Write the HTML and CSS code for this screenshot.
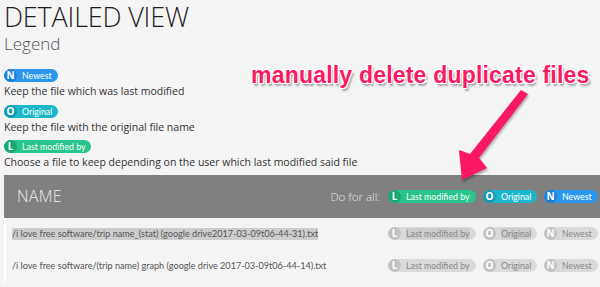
FILE: index.html
```html
<!DOCTYPE html>
<html lang="en">
<head>
    <meta charset="UTF-8">
    <title>Detailed View</title>
    <link rel="stylesheet" href="styles.css">
</head>
<body>

<div class="page">
    <h1 class="title">DETAILED VIEW</h1>
    <h2 class="subtitle">Legend</h2>

    <!-- Legend -->
    <div class="legend">
        <div class="legend-item">
            <span class="badge newest"><span class="key">N</span>Newest</span>
            <p>Keep the file which was last modified</p>
        </div>
        <div class="legend-item">
            <span class="badge original"><span class="key">O</span>Original</span>
            <p>Keep the file with the original file name</p>
        </div>
        <div class="legend-item">
            <span class="badge modified"><span class="key">L</span>Last modified by</span>
            <p>Choose a file to keep depending on the user which last modified said file</p>
        </div>
    </div>

    <!-- Files table -->
    <div class="files">
        <div class="files-head">
            <span class="head-name">NAME</span>
            <div class="do-all">
                <span class="do-label">Do for all:</span>
                <span class="badge modified wide"><span class="key">L</span>Last modified by</span>
                <span class="badge original"><span class="key">O</span>Original</span>
                <span class="badge newest"><span class="key">N</span>Newest</span>
            </div>
        </div>
        <div class="file-row">
            <span class="file-name selected">/i love free software/trip name_(stat) (google drive2017-03-09t06-44-31).txt</span>
            <div class="choices">
                <span class="badge off wide"><span class="key">L</span><span class="selected">Last modified by</span></span>
                <span class="badge off"><span class="key">O</span><span class="selected">Original</span></span>
                <span class="badge off"><span class="key">N</span>Newest</span>
            </div>
        </div>
        <div class="file-row">
            <span class="file-name">/i love free software/(trip name) graph (google drive 2017-03-09t06-44-14).txt</span>
            <div class="choices">
                <span class="badge off wide"><span class="key">L</span>Last modified by</span>
                <span class="badge off"><span class="key">O</span>Original</span>
                <span class="badge off"><span class="key">N</span>Newest</span>
            </div>
        </div>
    </div>
</div>

<!-- Annotation -->
<div class="callout">manually delete duplicate files</div>
<svg class="arrow" width="600" height="287" viewBox="0 0 600 287">
    <polygon points="521,90 528,94 479,158 487,168 462,180 459,150 470,154" fill="#fc1862"/>
</svg>

</body>
</html>
```

FILE: styles.css
```css
/* Global Styles */
body {
    margin: 0;
    padding: 0;
    background-color: #f4f4f4;
    font-family: 'Open Sans', sans-serif;
    color: #333;
    overflow: hidden;
}

.page {
    padding: 0 0 0 4px;
}

.title {
    margin: 0;
    padding-top: 2px;
    font-size: 27px;
    font-weight: 300;
    line-height: 30px;
    color: #1e1e1e;
    letter-spacing: -0.2px;
}

.subtitle {
    margin: 0;
    padding-top: 2px;
    font-size: 17px;
    font-weight: 300;
    line-height: 20px;
    color: #555;
}

/* Legend */
.legend {
    display: flex;
    flex-direction: column;
    padding-top: 15px;
}

.legend-item {
    display: flex;
    flex-direction: column;
    align-items: flex-start;
    gap: 2px;
    height: 35.5px;
}

.legend-item p {
    margin: 0;
    font-size: 10.5px;
    line-height: 15px;
    color: #333;
}

/* Badges */
.badge {
    display: inline-flex;
    align-items: center;
    flex: none;
    width: 54px;
    height: 13px;
    border-radius: 7px;
    font-family: Lato, sans-serif;
    font-size: 8.8px;
    color: #fff;
    white-space: nowrap;
    box-sizing: border-box;
    overflow: hidden;
}

.badge.wide {
    width: 88px;
}

.legend .badge.modified {
    width: 87px;
}

.key {
    display: inline-block;
    flex: none;
    width: 13px;
    height: 13px;
    margin-right: 5px;
    border-radius: 50%;
    text-align: center;
    font-family: 'Open Sans', sans-serif;
    font-size: 10px;
    font-weight: 700;
    line-height: 13px;
}

.newest {
    background-color: #2a96ee;
}

.newest .key {
    background-color: #1d7fdc;
}

.original {
    background-color: #1db7cb;
}

.original .key {
    background-color: #1599ae;
}

.modified {
    background-color: #27c48b;
}

.modified .key {
    background-color: #1aa872;
}

.off {
    background-color: #dadada;
    color: #888;
}

.off .key {
    background-color: #c2c2c2;
    color: #fff;
}

.selected {
    background-color: #cdcdcd;
}

/* Files table */
.files {
    margin-top: -1px;
    border-left: 2px solid #fff;
}

.files-head {
    display: flex;
    align-items: center;
    justify-content: space-between;
    height: 43px;
    padding: 0 2px 0 13px;
    margin-left: -2px;
    background-color: #808080;
}

.head-name {
    font-size: 16px;
    font-weight: 300;
    color: #ececec;
    letter-spacing: 0.3px;
}

.do-all {
    display: flex;
    align-items: center;
    gap: 7px;
    padding-top: 1px;
}

.do-label {
    margin-right: 1px;
    font-size: 11.5px;
    font-weight: 300;
    color: #e2e2e2;
}

.file-row {
    display: flex;
    align-items: center;
    justify-content: space-between;
    height: 32px;
    padding: 0 2px 0 6px;
}

.file-row:first-of-type {
    margin-top: 10px;
}

.file-name {
    font-family: Lato, sans-serif;
    font-size: 9.1px;
    color: #555;
    line-height: 12px;
}

.choices {
    display: flex;
    gap: 7px;
}

/* Annotation */
.callout {
    position: absolute;
    left: 251px;
    top: 62px;
    font-family: 'Liberation Sans', Arial, sans-serif;
    font-weight: 700;
    font-size: 23px;
    color: #fc1862;
    letter-spacing: 0.2px;
    text-shadow: -1px -1px 0 #fff, 1px -1px 0 #fff, -1px 1px 0 #fff, 1px 1px 0 #fff, 2px 3px 2px rgba(0, 0, 0, 0.35);
}

.arrow {
    position: absolute;
    left: 0;
    top: 0;
    filter: drop-shadow(1px 2px 1px rgba(0, 0, 0, 0.3));
}
```
